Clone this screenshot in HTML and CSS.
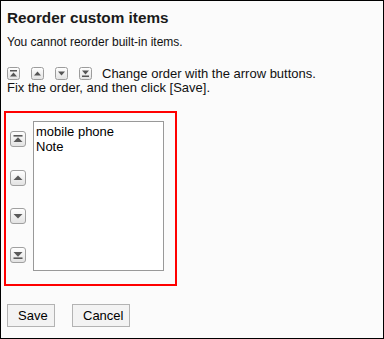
FILE: index.html
```html
<!DOCTYPE html>
<html>
<head>
<meta charset="utf-8">
<link rel="stylesheet" href="styles.css">
</head>
<body>
<div class="frame">
  <h1 class="title">Reorder custom items</h1>
  <p class="note">You cannot reorder built-in items.</p>
  <div class="help">
    <div class="help-line">
      <span class="icons">
        <svg class="ico ico-sm" width="13" height="13" viewBox="0 0 13 13"><defs><linearGradient id="g1" x1="0" y1="0" x2="0" y2="1"><stop offset="0" stop-color="#ffffff"/><stop offset="1" stop-color="#e2e2e2"/></linearGradient></defs><rect x="0.5" y="0.5" width="12" height="12" rx="2" fill="url(#g1)" stroke="#9c9c9c"/><rect x="3" y="3" width="7" height="1.5" fill="#555"/><polygon points="3,9.5 6.5,5.5 10,9.5" fill="#555"/></svg>
        <svg class="ico ico-sm" width="13" height="13" viewBox="0 0 13 13"><rect x="0.5" y="0.5" width="12" height="12" rx="2" fill="url(#g1)" stroke="#9c9c9c"/><polygon points="3,8.5 6.5,4.5 10,8.5" fill="#555"/></svg>
        <svg class="ico ico-sm" width="13" height="13" viewBox="0 0 13 13"><rect x="0.5" y="0.5" width="12" height="12" rx="2" fill="url(#g1)" stroke="#9c9c9c"/><polygon points="3,4.5 6.5,8.5 10,4.5" fill="#555"/></svg>
        <svg class="ico ico-sm" width="13" height="13" viewBox="0 0 13 13"><rect x="0.5" y="0.5" width="12" height="12" rx="2" fill="url(#g1)" stroke="#9c9c9c"/><polygon points="3,3.5 6.5,7.5 10,3.5" fill="#555"/><rect x="3" y="8.5" width="7" height="1.5" fill="#555"/></svg>
      </span>
      <span>Change order with the arrow buttons.</span>
    </div>
    <div class="help-line">Fix the order, and then click [Save].</div>
  </div>

  <div class="reorder">
    <div class="arrows">
      <button class="arrow" type="button"><svg class="ico" width="16" height="16" viewBox="0 0 16 16"><rect x="0.5" y="0.5" width="15" height="15" rx="2.5" fill="url(#g1)" stroke="#a0a0a0"/><rect x="3.5" y="4" width="9" height="1.6" fill="#5a5a5a"/><polygon points="3.5,11 8,6.3 12.5,11" fill="#5a5a5a"/></svg></button>
      <button class="arrow" type="button"><svg class="ico" width="16" height="16" viewBox="0 0 16 16"><rect x="0.5" y="0.5" width="15" height="15" rx="2.5" fill="url(#g1)" stroke="#a0a0a0"/><polygon points="3.5,10 8,5.5 12.5,10" fill="#5a5a5a"/></svg></button>
      <button class="arrow" type="button"><svg class="ico" width="16" height="16" viewBox="0 0 16 16"><rect x="0.5" y="0.5" width="15" height="15" rx="2.5" fill="url(#g1)" stroke="#a0a0a0"/><polygon points="3.5,6 8,10.5 12.5,6" fill="#5a5a5a"/></svg></button>
      <button class="arrow" type="button"><svg class="ico" width="16" height="16" viewBox="0 0 16 16"><rect x="0.5" y="0.5" width="15" height="15" rx="2.5" fill="url(#g1)" stroke="#a0a0a0"/><polygon points="3.5,5 8,9.7 12.5,5" fill="#5a5a5a"/><rect x="3.5" y="10.4" width="9" height="1.6" fill="#5a5a5a"/></svg></button>
    </div>
    <div class="listbox">
      <div class="opt">mobile phone</div>
      <div class="opt">Note</div>
    </div>
  </div>

  <div class="actions">
    <button class="btn" type="button">Save</button>
    <button class="btn" type="button">Cancel</button>
  </div>
</div>
</body>
</html>
```

FILE: styles.css
```css
html, body {
  margin: 0;
  padding: 0;
}
body {
  font-family: "Liberation Sans", Arial, sans-serif;
  color: #000;
}
.frame {
  width: 384px;
  height: 339px;
  box-sizing: border-box;
  border: 1px solid #000;
  background: #fbfbfb;
  padding: 7px 0 0 6px;
}
.title {
  margin: 0;
  font-size: 15.3px;
  line-height: 19px;
  font-weight: bold;
  color: #1a1a1a;
}
.note {
  margin: 8px 0 0 0;
  font-size: 12px;
  line-height: 14px;
  color: #111;
}
.help {
  margin-top: 17px;
  font-size: 13px;
  line-height: 15px;
  color: #111;
}
.help-line {
  display: flex;
  align-items: center;
  height: 15px;
}
.help-line + .help-line {
  margin-top: -1px;
}
.icons {
  display: flex;
  flex: none;
  gap: 11px;
  margin-right: 10px;
}
.ico {
  display: block;
  flex: none;
  width: 16px;
  height: 16px;
}
.ico-sm {
  width: 13px;
  height: 13px;
}
.reorder {
  display: flex;
  width: 173px;
  height: 175px;
  box-sizing: border-box;
  margin: 16px 0 0 -3px;
  border: 2px solid #ff0000;
  padding: 8px 0 0 4px;
}
.arrows {
  display: flex;
  flex-direction: column;
  padding-top: 10px;
  width: 23px;
  flex: none;
}
.arrow {
  display: block;
  flex: none;
  padding: 0;
  margin: 0 0 23px 0;
  border: 0;
  background: none;
  width: 16px;
  height: 16px;
}
.arrow:nth-child(2) {
  margin-bottom: 22px;
}
.listbox {
  width: 131px;
  height: 150px;
  flex: none;
  box-sizing: border-box;
  border: 1px solid #999;
  background: #fff;
  padding: 2px 2px;
  font-size: 13px;
  line-height: 15px;
}
.actions {
  display: flex;
  gap: 17px;
  margin-top: 18px;
}
.btn {
  font-family: "Liberation Sans", Arial, sans-serif;
  font-size: 13px;
  height: 23px;
  padding: 0 10px;
  background: #f3f3f3;
  border: 1px solid #b3b3b3;
  border-radius: 0;
  color: #000;
}
.btn:first-child {
  width: 48px;
}
.btn:last-child {
  width: 58px;
}
```
